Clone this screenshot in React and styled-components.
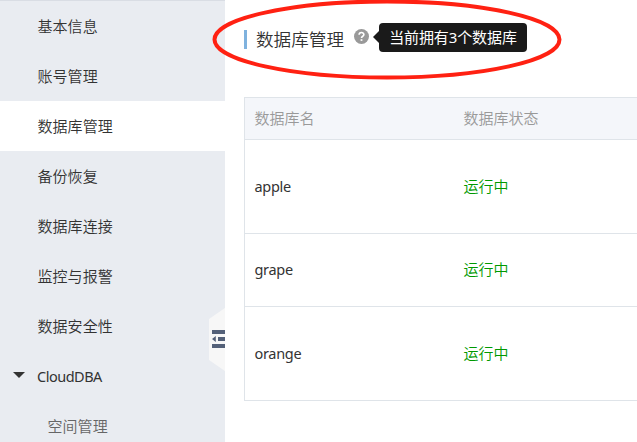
import React from 'react';
import styled, { createGlobalStyle } from 'styled-components';

const GlobalStyle = createGlobalStyle`
  *, *::before, *::after { box-sizing: border-box; }
  body {
    margin: 0;
    overflow: hidden;
    background: #fff;
    color: #333;
    font: 15px/20px "Noto Sans", "Noto Sans CJK SC", sans-serif;
  }
`;

const Page = styled.div`
  position: relative;
  display: flex;
  width: 637px;
  height: 442px;
  overflow: hidden;
`;

const Sidebar = styled.nav`
  position: relative;
  flex: 0 0 225px;
  border-top: 1px solid #d9dde4;
  background: #e9ecf1;
`;

const NavItem = styled.a`
  display: flex;
  align-items: center;
  height: 50px;
  padding-left: ${(p) => (p.$nested ? 47.4 : 37.4)}px;
  color: ${(p) => (p.$nested ? '#666' : '#333')};
  background: ${(p) => (p.$active ? '#fff' : 'transparent')};
  font-weight: 350;
  letter-spacing: 0.1px;
  white-space: nowrap;
`;

const NavGroup = styled(NavItem)`
  padding-left: 13px;
  gap: 12px;
  font-weight: 400;
  font-size: 14.5px;
  letter-spacing: -0.5px;
`;

const Caret = styled.svg`
  width: 12px;
  height: 6px;
  margin-top: -2px;
`;

const CollapseHandle = styled.svg`
  position: absolute;
  right: 0;
  top: 307px;
  width: 16px;
  height: 63px;
`;

const Main = styled.main`
  flex: 1;
  min-width: 0;
  padding: 23px 0 0 19px;
`;

const TitleBar = styled.header`
  display: flex;
  align-items: flex-start;
  height: 74px;
`;

const Title = styled.h1`
  display: flex;
  align-items: center;
  height: 19px;
  margin: 7px 0 0;
  padding-left: 9px;
  border-left: 3px solid #7fb2de;
  font-size: 17.6px;
  font-weight: 350;
  line-height: 19px;
  white-space: nowrap;
`;

const HelpIcon = styled.svg`
  width: 15px;
  height: 15px;
  margin: 6px 0 0 10px;
`;

const Tooltip = styled.div`
  position: relative;
  width: 148px;
  height: 29px;
  margin-left: 10px;
  border-radius: 4px;
  background: #1a1a1a;
  color: #fff;
  line-height: 29px;
  text-align: center;
  letter-spacing: -0.1px;
  white-space: nowrap;

  &::before {
    content: '';
    position: absolute;
    left: -6px;
    top: 8px;
    border: solid transparent;
    border-width: 6px 6px 6px 0;
    border-right-color: #1a1a1a;
  }
`;

const Table = styled.div`
  border: 1px solid #dfe4e9;
  border-right: 0;
`;

const Row = styled.div`
  display: grid;
  grid-template-columns: 209px 1fr;
  align-items: center;
  height: ${(p) => p.$height}px;
  padding: 0 0 2px 9.5px;
  border-bottom: 1px solid #dfe4e9;

  &:last-child { border-bottom: 0; }
`;

const HeadRow = styled(Row)`
  background: #f4f6fa;
  color: #999;
`;

const Cell = styled.span`
  font-weight: ${(p) => (p.$latin ? 400 : 350)};
  font-size: ${(p) => (p.$latin ? '14.5px' : '15px')};
  letter-spacing: ${(p) => (p.$latin ? '-0.3px' : 'normal')};
`;

const Status = styled(Cell)`
  color: #090;
`;

const Highlight = styled.svg`
  position: absolute;
  left: 0;
  top: 0;
  pointer-events: none;
`;

const navItems = ['基本信息', '账号管理', '数据库管理', '备份恢复', '数据库连接', '监控与报警', '数据安全性'];

const databases = [
  { name: 'apple', height: 94 },
  { name: 'grape', height: 73 },
  { name: 'orange', height: 93 },
];

export default function App() {
  return (
    <Page>
      <GlobalStyle />
      <Sidebar>
        {navItems.map((label) => (
          <NavItem key={label} $active={label === '数据库管理'}>{label}</NavItem>
        ))}
        <NavGroup>
          <Caret viewBox="0 0 12 6"><path d="M0 0H12L6 6Z" fill="#333" /></Caret>
          CloudDBA
        </NavGroup>
        <NavItem $nested>空间管理</NavItem>
        <CollapseHandle viewBox="0 0 16 63">
          <path d="M16 0V63L0 52V11Z" fill="#f7f7f7" />
          <path d="M3 22H16V26H3ZM9 29H16V33H9ZM3 36H16V40H3ZM6.8 28V34L3 31Z" fill="#546179" />
        </CollapseHandle>
      </Sidebar>
      <Main>
        <TitleBar>
          <Title>数据库管理</Title>
          <HelpIcon viewBox="0 0 15 15">
            <circle cx="7.5" cy="7.5" r="7.5" fill="#999" />
            <path d="M5.1 5.8C5.1 2.8 9.9 2.8 9.9 5.6C9.9 7.3 7.5 7.2 7.5 9.1" fill="none" stroke="#fff" strokeWidth="1.6" />
            <rect x="6.6" y="10.2" width="1.8" height="1.7" fill="#fff" />
          </HelpIcon>
          <Tooltip>当前拥有3个数据库</Tooltip>
        </TitleBar>
        <Table>
          <HeadRow $height={42}>
            <Cell>数据库名</Cell>
            <Cell>数据库状态</Cell>
          </HeadRow>
          {databases.map(({ name, height }) => (
            <Row key={name} $height={height}>
              <Cell $latin>{name}</Cell>
              <Status>运行中</Status>
            </Row>
          ))}
        </Table>
      </Main>
      <Highlight width="637" height="90" viewBox="0 0 637 90">
        <ellipse cx="387" cy="39.5" rx="172.5" ry="38" fill="none" stroke="#ff2112" strokeWidth="4" />
      </Highlight>
    </Page>
  );
}
